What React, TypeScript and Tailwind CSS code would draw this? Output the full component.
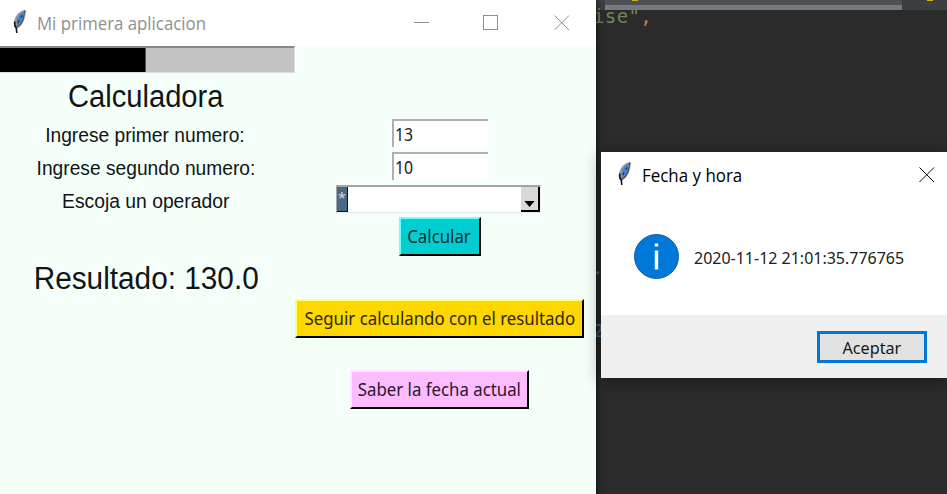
import React from 'react';

const segoe = "font-['Open_Sans','Noto_Sans',sans-serif]";
const segoeHinted = "font-['Noto_Sans','Open_Sans',sans-serif]";
const arial = "font-['Liberation_Sans',Arial,sans-serif]";
const mono = "font-['DejaVu_Sans_Mono',monospace]";

/** Tk feather shown in both title bars */
function Feather() {
  return (
    <svg width="16" height="26" viewBox="0 0 16 26" className="block shrink-0">
      <path d="M14.6 1C10.500 1.300 7 3.800 4.600 7.800c-1.600 3.500-2.300 7.200-1.200 10.700l2 1.500c3.500-1.800 6.200-4.500 7.500-8.500C14.100 8 15.100 5 14.600 1Z" fill="#94989b" />
      <path d="M14.2 1.500C12.500 3 13.500 7 11.800 11c-1.300 3.200-3.300 5.500-6.300 7.300" fill="none" stroke="#454b55" strokeWidth="1.100" />
      <path d="M13 2.500C9.800 4 7.500 6.800 6 10l-.3 6.500c3-1.800 5.100-4.500 5.900-7.500.7-2.500 1.500-4.500 1.400-6.500Z" fill="#4384d2" />
      <path d="M11 6.500 9.800 8.500M8 11.500 6.800 14" fill="none" stroke="#16345e" strokeWidth="1.400" />
      <path d="M3.800 12.500c-.5 2.500 0 4.800 1.500 6.500L5.800 24" fill="none" stroke="#171717" strokeWidth="1.600" />
    </svg>
  );
}

function CloseIcon({ className }: { className: string }) {
  return (
    <svg width="16" height="16" viewBox="0 0 16 16" className={className}>
      <path d="M.5.5 15 15M15 .5.5 15" stroke="currentColor" fill="none" />
    </svg>
  );
}

function Entry({ value }: { value: string }) {
  return (
    <div className={`flex h-[28px] w-[96px] items-center border-t-2 border-l-2 border-t-[#b0b0b0] border-l-[#b0b0b0] bg-white pl-px text-[18px] text-[#202020] ${segoeHinted}`}>
      <span className="origin-left scale-x-[0.88]">{value}</span>
    </div>
  );
}

function TkButton({ className, children }: { className: string; children: string }) {
  return (
    <div className={`flex h-[39px] items-center justify-center border-2 pb-px whitespace-nowrap text-[18px] ${segoeHinted} ${className}`}>
      <span className="scale-x-[0.934]">{children}</span>
    </div>
  );
}

function Editor() {
  return (
    <div className="absolute inset-0 flex flex-col bg-[#2b2b2b] pl-[596px]">
      <div className="flex h-[10px] bg-[#3c3f41]">
        <div className="ml-[9px] flex w-[297px] flex-col justify-between bg-[#4e5254]">
          <div className="ml-[27px] h-px w-[6px] bg-[#d6b11b]" />
          <div className="h-[5px] bg-[#747a80]" />
        </div>
        <div className="ml-[25px] h-px w-[6px] bg-[#d6b11b]" />
      </div>
      <div className={`-ml-[3px] h-[24px] text-[19px] leading-[12px] tracking-[0.4px] whitespace-pre ${mono} text-[#6a8759]`}>
        ise"<span className="text-[#cc7832]">,</span>
      </div>
      <div className={`mt-[224px] -ml-[4px] h-[30px] text-[18px] leading-[20px] ${mono} text-[#6a8759]`}>.</div>
      <div className={`mt-[31px] -ml-[3px] text-[18px] leading-[24px] ${mono} text-[#4d7194]`}>2</div>
    </div>
  );
}

function Calculator() {
  return (
    <div className="absolute top-0 left-0 flex h-[494px] w-[596px] flex-col bg-[#f4fffa] shadow-[1px_0_5px_rgba(0,0,0,0.6)]">
      <div className={`flex h-[46px] shrink-0 items-start bg-white text-[#909090] ${segoe}`}>
        <div className="pt-[9px] pl-[11px]"><Feather /></div>
        <div className="ml-[10px] h-[46px] w-[377px] origin-left scale-x-[0.934]">
          <div className="text-[18px] leading-[47px]">Mi primera aplicacion</div>
        </div>
        <div className="mt-[22px] h-px w-[15px] bg-[#909090]" />
        <div className="mt-[15px] ml-[54px] size-[15px] border border-[#909090]" />
        <CloseIcon className="mt-[15px] ml-[56px] text-[#909090]" />
      </div>
      <div className="flex">
        <div className={`flex w-[295px] flex-col text-[#101414] ${arial}`}>
          <div className="flex h-[27px] border-t-2 border-r border-b border-t-[#888] border-r-[#ddd] border-b-[#ddd] bg-[#c3c3c3]">
            <div className="w-[146px] border-r border-[#555] bg-black" />
          </div>
          <div className="flex w-[292px] flex-col items-center whitespace-nowrap">
            <div className="h-[45px] scale-x-[0.94] text-[31px] leading-[48px]">Calculadora</div>
            <div className="mr-[2px] h-[33px] scale-x-[0.96] text-[20px] leading-[35px]">Ingrese primer numero:</div>
            <div className="mr-px h-[33px] scale-x-[0.96] text-[20px] leading-[35px]">Ingrese segundo numero:</div>
            <div className="h-[33px] scale-x-[0.965] text-[20px] leading-[35px]">Escoja un operador</div>
            <div className="mt-[42px] h-[40px] scale-x-[0.96] text-[31px] leading-[40px]">Resultado: 130.0</div>
          </div>
        </div>
        <div className="flex w-[289px] flex-col items-center pt-[73px]">
          <Entry value="13" />
          <div className="h-[5px]" />
          <Entry value="10" />
          <div className="mt-[5px] mr-[2px] flex h-[28px] w-[205px] border-t-2 border-r border-b border-l border-t-[#a5a5a5] border-r-[#eee] border-b-[#e8e8e8] border-l-[#a5a5a5] bg-white">
            <div className={`flex w-[11px] justify-center border-r border-b border-[#111] bg-[#4a6984] text-[15px] leading-[21px] text-[#d5dce2] ${segoe}`}>*</div>
            <div className="flex-1" />
            <div className="flex w-[19px] items-end justify-center border-r-2 border-b-2 border-black bg-[#d9d9d9] pb-[3px]">
              <svg width="11" height="6" viewBox="0 0 12 7"><path d="M0 0h12L6 7Z" /></svg>
            </div>
          </div>
          <TkButton className="mt-[4px] w-[82px] border-t-[#70ffff] border-r-black border-b-black border-l-[#70ffff] bg-[#00ced1] text-[#072b30]">Calcular</TkButton>
          <TkButton className="mt-[43px] w-[289px] border-t-[#ffff70] border-r-black border-b-black border-l-[#ffff70] bg-[#ffd700] text-[#2d2600]">Seguir calculando con el resultado</TkButton>
          <TkButton className="mt-[32px] mr-px w-[179px] border-t-[#ffe8ff] border-r-black border-b-black border-l-[#ffe8ff] bg-[#ffbbff] text-[#2a1830]">Saber la fecha actual</TkButton>
        </div>
      </div>
    </div>
  );
}

function DateDialog() {
  return (
    <div className={`absolute top-[152px] left-[601px] flex h-[226px] w-[346px] flex-col bg-white shadow-[0_3px_16px_rgba(0,0,0,0.4)] ${segoe}`}>
      <div className="flex h-[48px] items-start">
        <div className="pt-[9px] pl-[15px]"><Feather /></div>
        <div className="ml-[10px] w-[277px] origin-left scale-x-[0.94] text-[18px] leading-[47px] text-black">Fecha y hora</div>
        <CloseIcon className="mt-[15px] text-black" />
      </div>
      <div className="flex flex-1 items-start pt-[34px] pl-[33px]">
        <svg width="46" height="46" viewBox="0 0 46 46" className="shrink-0">
          <circle cx="22.500" cy="22.500" r="22" fill="#0078d7" stroke="#175f9c" />
          <path d="M20.800 9.500h3.400v3h-3.400zM20.800 16.500h3.400v19h-3.400z" fill="white" />
        </svg>
        <div className={`ml-[14px] origin-left scale-x-[0.94] text-[17px] leading-[48px] whitespace-nowrap text-[#202020] ${segoeHinted}`}>2020-11-12 21:01:35.776765</div>
      </div>
      <div className="flex h-[63px] justify-end bg-[#f0f0f0] pt-[16px] pr-[20px]">
        <div className={`flex h-[32px] w-[110px] items-center justify-center border-[3px] border-[#0078d7] bg-[#e1e1e1] pt-px text-[17px] text-[#181818] ${segoeHinted}`}>
          <span className="scale-x-[0.95]">Aceptar</span>
        </div>
      </div>
    </div>
  );
}

export default function App() {
  return (
    <div className="relative h-[494px] w-[947px] overflow-hidden">
      <Editor />
      <Calculator />
      <DateDialog />
    </div>
  );
}
